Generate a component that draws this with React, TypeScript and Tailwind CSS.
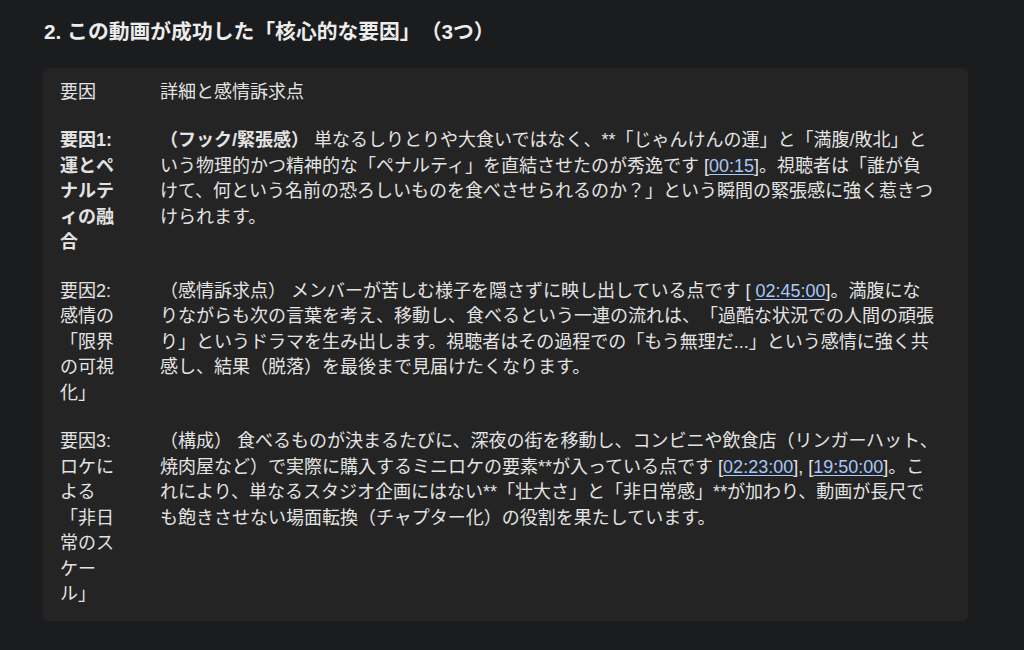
const FONT = '"Liberation Sans", "Noto Sans CJK JP", sans-serif';

function TimeLink({ t }: { t: string }) {
    return <span className="text-[#a8c7fa] underline underline-offset-2 decoration-1">{t}</span>;
}

// line breaks follow the reference layout
const rows = [
    {
        label: '要因1: 運とペナルティの融合',
        bold: true,
        body: (
            <>
                <span className="font-bold">（フック/緊張感）</span> 単なるしりとりや大食いではなく、**「じゃんけんの運」と「満腹/敗北」と<br />
                いう物理的かつ精神的な「ペナルティ」を直結させたのが秀逸です [<TimeLink t="00:15" />]。視聴者は「誰が負<br />
                けて、何という名前の恐ろしいものを食べさせられるのか？」という瞬間の緊張感に強く惹きつ<br />
                けられます。
            </>
        ),
    },
    {
        label: '要因2: 感情の「限界の可視化」',
        bold: false,
        body: (
            <>
                （感情訴求点） メンバーが苦しむ様子を隠さずに映し出している点です [ <TimeLink t="02:45:00" />]。満腹にな<br />
                りながらも次の言葉を考え、移動し、食べるという一連の流れは、「過酷な状況での人間の頑張<br />
                り」というドラマを生み出します。視聴者はその過程での「もう無理だ...」という感情に強く共<br />
                感し、結果（脱落）を最後まで見届けたくなります。
            </>
        ),
    },
    {
        label: '要因3: ロケによる「非日常のスケール」',
        bold: false,
        body: (
            <>
                （構成） 食べるものが決まるたびに、深夜の街を移動し、コンビニや飲食店（リンガーハット、<br />
                焼肉屋など）で実際に購入するミニロケの要素**が入っている点です [<TimeLink t="02:23:00" />], [<TimeLink t="19:50:00" />]。こ<br />
                れにより、単なるスタジオ企画にはない**「壮大さ」と「非日常感」**が加わり、動画が長尺で<br />
                も飽きさせない場面転換（チャプター化）の役割を果たしています。
            </>
        ),
    },
];

export default function App() {
    return (
        <div
            className="min-h-[650px] bg-[#1b1c1e] text-[#e3e3e3] pt-[18px] [text-spacing-trim:space-all]"
            style={{ fontFamily: FONT }}
        >
            <h2 className="ml-[44px] text-[20.8px] leading-7 font-bold text-[#ececec]">
                2. この動画が成功した「核心的な要因」（3つ）
            </h2>

            <div className="ml-[43px] mt-[22px] w-[925px] rounded-md bg-[#242424] pb-[2px] text-[18px] leading-[25.5px]">
                {/* header */}
                <div className="grid grid-cols-[117px_1fr] pt-[12px] pb-[11px]">
                    <div className="pl-[17px]">要因</div>
                    <div className="pr-[16px]">詳細と感情訴求点</div>
                </div>

                {rows.map((row) => (
                    <div key={row.label} className="grid grid-cols-[117px_1fr] py-[11.5px]">
                        <div className="pl-[17px]">
                            <div className={`w-[60px] ${row.bold ? 'font-bold' : ''}`}>{row.label}</div>
                        </div>
                        <div className="pr-[16px]">{row.body}</div>
                    </div>
                ))}
            </div>
        </div>
    );
}
